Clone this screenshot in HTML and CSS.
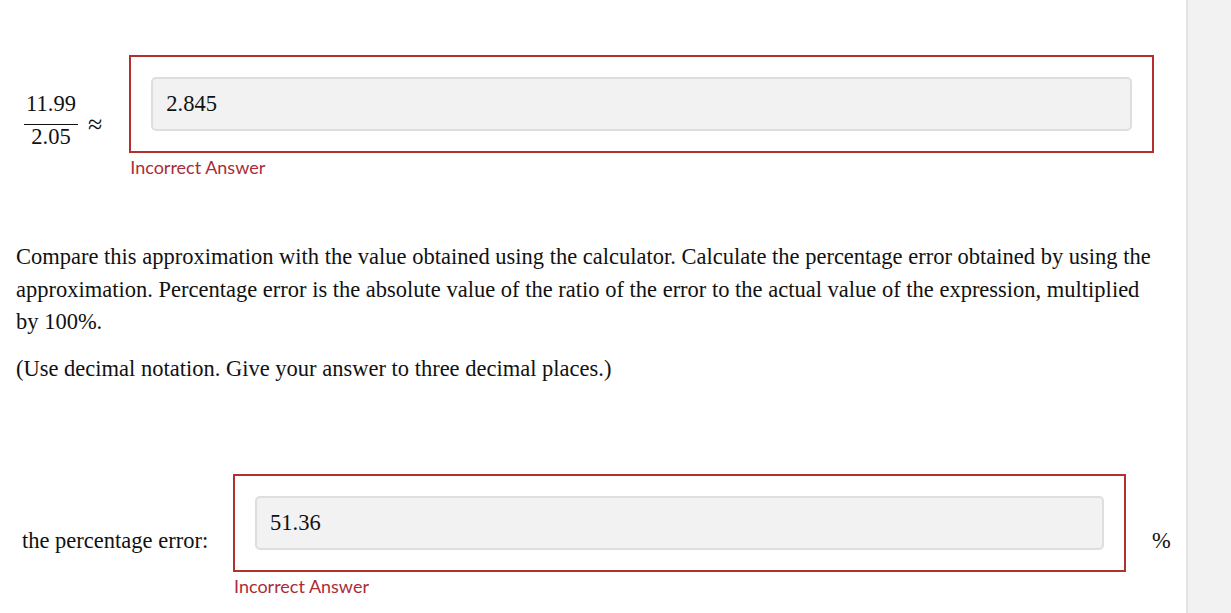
FILE: index.html
```html
<!DOCTYPE html>
<html lang="en">
<head>
    <meta charset="UTF-8">
    <title>Percentage error</title>
    <link rel="stylesheet" href="styles.css">
</head>
<body>
    <div class="page">
        <main class="content">

            <div class="answer-row first-row">
                <div class="math">
                    <span class="fraction">
                        <span class="num">11.99</span>
                        <span class="den">2.05</span>
                    </span>
                    <span class="approx">&asymp;</span>
                </div>
                <div class="answer">
                    <div class="answer-box">
                        <div class="answer-input">2.845</div>
                    </div>
                    <div class="feedback">Incorrect Answer</div>
                </div>
            </div>

            <p class="text first-text">Compare this approximation with the value obtained using the calculator. Calculate the percentage error obtained by using the approximation. Percentage error is the absolute value of the ratio of the error to the actual value of the expression, multiplied by 100%.</p>
            <p class="text">(Use decimal notation. Give your answer to three decimal places.)</p>

            <div class="answer-row second-row">
                <div class="label">the percentage error:</div>
                <div class="answer">
                    <div class="answer-box wide">
                        <div class="answer-input">51.36</div>
                    </div>
                    <div class="feedback">Incorrect Answer</div>
                </div>
                <div class="unit">%</div>
            </div>

        </main>
        <aside class="side-strip"></aside>
    </div>
</body>
</html>
```

FILE: styles.css
```css
html, body {
    margin: 0;
    height: 100%;
}
body {
    font-family: 'Liberation Serif', 'Times New Roman', serif;
    font-size: 22.5px;
    color: #111;
    background: #fff;
}
.page {
    display: flex;
    height: 100%;
}
.content {
    width: 1186px;
    flex: none;
}
.side-strip {
    flex: 1;
    background-color: #f2f2f2;
    border-left: 2px solid #e4e4e4;
}

/* answer rows */
.answer-row {
    display: flex;
    align-items: flex-start;
}
.first-row {
    padding: 55px 0 0 24px;
}
.math {
    display: flex;
    align-items: center;
    margin-top: 37px;
    margin-right: 27px;
}
.fraction {
    display: inline-flex;
    flex-direction: column;
    align-items: center;
    width: 54px;
    line-height: 24px;
}
.fraction .num {
    border-bottom: 1px solid #111;
    width: 100%;
    text-align: center;
    padding-bottom: 8px;
}
.approx {
    margin-left: 10px;
    margin-top: 8px;
    font-size: 26px;
}
.answer-box {
    width: 981px;
    border: 2px solid #b3302f;
    padding: 20px;
}
.answer-box.wide {
    width: 849px;
}
.answer-input {
    height: 54px;
    box-sizing: border-box;
    border: 2px solid #dedede;
    border-radius: 5px;
    background-color: #f2f2f2;
    padding: 13px 13px 0;
    line-height: 24px;
}
.feedback {
    font-family: 'Lato', 'Open Sans', sans-serif;
    font-size: 18px;
    color: #ab2b37;
    margin-top: 3px;
    margin-left: 1px;
}

/* question text */
.text {
    margin: 0 0 14px 16px;
    line-height: 32.5px;
    width: 1150px;
}
.first-text {
    margin-top: 63px;
}

.second-row {
    padding-left: 22px;
    margin-top: 89px;
}
.label {
    margin-top: 54px;
    width: 211px;
}
.unit {
    margin-top: 54px;
    margin-left: 26px;
}
```
